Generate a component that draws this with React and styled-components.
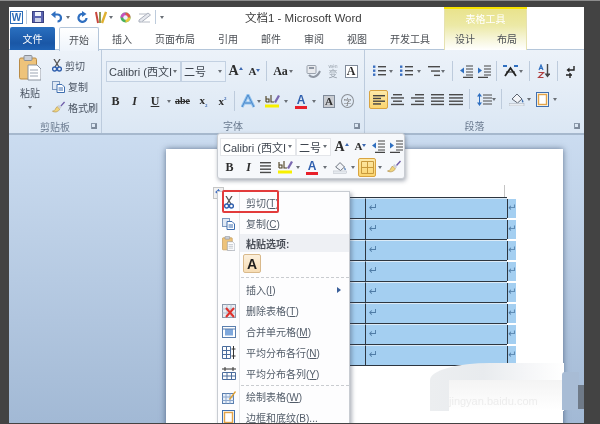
import React from 'react';
import styled, { createGlobalStyle } from 'styled-components';

const Global = createGlobalStyle`
  html, body { margin: 0; padding: 0; background: #434343; }
  body { font-family: "Liberation Sans", "Noto Sans CJK SC", sans-serif; }
`;

const Root = styled.div`
  width: 600px;
  height: 424px;
  box-sizing: border-box;
  padding: 7px 16px 0 9px;
  background: #434343;
  border-top: 1px solid #8d8d8d;
  overflow: hidden;
  filter: blur(0.4px);
`;

const Window = styled.div`
  position: relative;
  height: 416px;
  margin-top: -1px;
  display: flex;
  flex-direction: column;
  overflow: hidden;
`;

const Header = styled.header`
  display: grid;
  grid-template-columns: 435px 83px 1fr;
  height: 43px;
  box-sizing: border-box;
  background: #fff;
  border-bottom: 1px solid #b4c6da;
  flex: none;
`;

const HeaderMain = styled.div`
  display: flex;
  flex-direction: column;
`;

const TitleBar = styled.div`
  display: flex;
  align-items: center;
  height: 20px;
`;

const Title = styled.span`
  margin-left: 81px;
  font-size: 11.5px;
  color: #3c3c3c;
  white-space: nowrap;
`;

const TabRow = styled.nav`
  display: flex;
  align-items: stretch;
  height: 23px;
`;

const FileTab = styled.div`
  width: 45px;
  margin-left: 1px;
  display: flex;
  align-items: center;
  justify-content: center;
  font-size: 10px;
  color: #fff;
  border-radius: 2px 2px 0 0;
  background: linear-gradient(#2a70c0, #1a57a6 70%, #1f62b4);
`;

const Tab = styled.div`
  margin-left: ${p => p.$ml}px;
  display: flex;
  align-items: center;
  font-size: 10px;
  white-space: nowrap;
  color: #4b4f55;
  ${p => p.$active && `
    width: 40px;
    justify-content: center;
    height: 24px;
    box-sizing: border-box;
    border: 1px solid #b4c6da;
    border-bottom: 0;
    border-radius: 2px 2px 0 0;
    background: linear-gradient(#fff, #eef4fb);
    position: relative;
    z-index: 1;
  `}
`;

const TableTools = styled.div`
  display: flex;
  flex-direction: column;
  border-top: 2px solid #f7e300;
  background: linear-gradient(#e9e38c, #ece9a6 40%, #f7f6dc 75%, #fff);
  box-shadow: inset 1px 0 #e6e2b0, inset -1px 0 #e6e2b0;
`;

const ToolsLabel = styled.div`
  height: 18px;
  display: flex;
  align-items: center;
  justify-content: center;
  font-size: 10px;
  color: #fff;
`;

const Ribbon = styled.div`
  display: flex;
  height: 85px;
  box-sizing: border-box;
  flex: none;
  background: linear-gradient(#ecf2f9, #dbe7f4);
  border-bottom: 2px solid #a6b8cd;
`;

const Group = styled.section`
  position: relative;
  width: ${p => p.$w}px;
  flex: none;
  display: flex;
  flex-direction: column;
  padding-top: 9px;
  box-sizing: border-box;
  border-right: ${p => (p.$last ? 0 : '1px solid #bccbdd')};
`;

const GroupBody = styled.div`
  flex: 1;
`;

const GroupLabel = styled.div`
  height: 17px;
  margin-bottom: -1px;
  display: flex;
  align-items: center;
  justify-content: center;
  font-size: 10px;
  color: #6b7b90;
`;

const Launcher = styled.span`
  position: absolute;
  right: 4px;
  bottom: 4px;
  width: 5px;
  height: 5px;
  border-left: 1px solid #8b99aa;
  border-top: 1px solid #8b99aa;
  box-shadow: inset -2px -2px 0 #7d8a9b;
`;

const ClipBody = styled.div`
  display: flex;
  padding-left: 10px;
  margin-top: -4px;
`;

const PasteCol = styled.div`
  display: flex;
  flex-direction: column;
  align-items: center;
  width: 22px;
`;

const PasteLabel = styled.span`
  font-size: 10px;
  color: #4b5563;
  margin-top: 4px;
`;

const SmallCol = styled.div`
  margin-left: 11px;
  display: flex;
  flex-direction: column;
`;

const SmallItem = styled.div`
  height: 21px;
  display: flex;
  align-items: center;
  gap: 3px;
  font-size: 10px;
  color: #4b5563;
`;

const Row = styled.div`
  display: flex;
  align-items: center;
  height: ${p => p.$h || 24}px;
  margin-top: ${p => p.$mt || 0}px;
`;

const Tool = styled.span`
  flex: none;
  display: inline-flex;
  align-items: center;
  justify-content: center;
  position: relative;
  width: ${p => p.$w}px;
  margin-left: ${p => p.$ml || 0}px;
  ${p => p.$on && `
    height: 19px;
    border: 1px solid #d9a441;
    border-radius: 2px;
    box-sizing: border-box;
    background: linear-gradient(#fde9a8, #fbd56f);
  `}
`;

const Caret = styled.span`
  flex: none;
  width: 0;
  margin-left: ${p => p.$ml || 0}px;
  margin-top: ${p => p.$mt || 0}px;
  border-top: 3px solid #6a6f76;
  border-left: 2.5px solid transparent;
  border-right: 2.5px solid transparent;
`;

const Sep = styled.span`
  flex: none;
  width: 1px;
  height: ${p => p.$h || 20}px;
  margin-left: ${p => p.$ml || 0}px;
  background: #bdcbdc;
`;

const Combo = styled.div`
  flex: none;
  box-sizing: border-box;
  width: ${p => p.$w}px;
  height: ${p => p.$h || 21}px;
  margin-left: ${p => p.$ml || 0}px;
  display: flex;
  align-items: center;
  justify-content: space-between;
  padding: 0 3px 0 2px;
  font-size: 11px;
  color: #3f4650;
  white-space: nowrap;
  overflow: hidden;
  background: ${p => p.$bg || '#eaf1f9'};
  border: 1px solid ${p => p.$line || '#c3d1e2'};
`;

const Letter = styled.span`
  font-family: ${p => (p.$sans ? '"Liberation Sans"' : '"Liberation Serif"')}, serif;
  font-size: ${p => p.$s || 12}px;
  font-weight: 700;
  font-style: ${p => (p.$it ? 'italic' : 'normal')};
  text-decoration: ${p => p.$deco || 'none'};
  color: ${p => p.$c || '#2d2d2d'};
  line-height: 1;
  ${p => p.$bar && `border-bottom: 3px solid ${p.$bar}; padding: 0 2px;`}
`;

const Sub = styled.sub`
  font-size: 5px;
  color: #3c68b0;
  line-height: 0;
`;

const Sup = styled.sup`
  font-size: 5px;
  color: #3c68b0;
  line-height: 0;
`;

const Mark = styled.span`
  width: 0;
  align-self: flex-start;
  margin-top: 3px;
  border-left: 2px solid transparent;
  border-right: 2px solid transparent;
  ${p => (p.$down ? 'border-top: 3px solid #3c68b0;' : 'border-bottom: 3px solid #3c68b0;')}
`;

const Boxed = styled.span`
  width: 13px;
  height: 13px;
  display: flex;
  align-items: center;
  justify-content: center;
  border: 1px solid #7f8a99;
  background: ${p => p.$bg || '#fff'};
  box-sizing: border-box;
`;

const Round = styled.span`
  width: 12px;
  height: 12px;
  border-radius: 50%;
  border: 1px solid #8a8f96;
  font-size: 8px;
  color: #777;
  display: flex;
  align-items: center;
  justify-content: center;
`;

const WenStack = styled.span`
  display: flex;
  flex-direction: column;
  align-items: center;
  font-size: 5px;
  line-height: 6px;
  color: #9aa3ad;
`;

const WenChar = styled.span`
  font-size: 9px;
  line-height: 10px;
`;

const WordLogo = styled.span`
  flex: none;
  width: 13px;
  height: 13px;
  margin-left: 1px;
  box-sizing: border-box;
  border: 1px solid #2b6cb8;
  background: #fff;
  color: #2b6cb8;
  font: bold 10px/11px "Liberation Sans", sans-serif;
  text-align: center;
`;

const DocArea = styled.main`
  flex: 1;
  min-height: 0;
  display: flex;
  padding: 14px 0 0 157px;
  background: linear-gradient(#cbdcf0, #a2b9d5);
`;

const Page = styled.div`
  position: relative;
  width: 397px;
  height: 300px;
  box-sizing: border-box;
  padding: 48px 0 0 56px;
  background: #fff;
  box-shadow: 0 0 6px rgba(40, 60, 90, 0.65);
`;

const MoveHandle = styled.span`
  position: absolute;
  left: 47px;
  top: 38px;
  width: 9px;
  height: 10px;
  border: 1px solid #c6c6c6;
  background: #f2f2f2;
  color: #3566c0;
  font-size: 8px;
  line-height: 9px;
  text-align: center;
`;

const CornerMark = styled.span`
  position: absolute;
  left: 338px;
  top: 36px;
  width: 11px;
  height: 12px;
  border-left: 1px solid #c4c4c4;
  box-shadow: 0 11px 0 -10px #c4c4c4;
`;

const TableRow = styled.div`
  display: flex;
  height: 21px;
  box-sizing: border-box;
  border-top: 1px solid #2d3640;
  width: 285px;
`;

const Cell = styled.div`
  box-sizing: border-box;
  flex: none;
  width: ${p => p.$w}px;
  padding-left: 3px;
  background: #a4cff1;
  border-left: ${p => (p.$line ? '1px solid #2d3640' : 0)};
  border-top: 1px solid #dcebf7;
  color: #4f7ca6;
  font: 11px/17px "DejaVu Sans", sans-serif;
`;

const RowEnd = styled.div`
  flex: none;
  width: 8px;
  margin-top: 1px;
  height: 19px;
  background: #a4cff1;
  color: #4f7ca6;
  font: 10px/18px "DejaVu Sans", sans-serif;
  text-align: center;
  border-left: 1px solid #2d3640;
`;

const TableEnd = styled.div`
  width: 285px;
  height: 1px;
  background: #2d3640;
`;

const Smudge = styled.div`
  position: absolute;
  left: 421px;
  top: 356px;
  width: 134px;
  height: 48px;
  border-radius: 60px 0 0 0 / 17px 0 0 0;
  background: linear-gradient(90deg, #eceef0, #e8ebee 40%, #f4f5f7 70%, #fff);
  overflow: hidden;
`;

const SmudgeLower = styled.div`
  position: absolute;
  left: 19px;
  top: 17px;
  width: 115px;
  height: 31px;
  background: linear-gradient(#f4f4f4, #fff);
  color: #ececec;
  font-size: 11px;
  padding-top: 15px;
  box-sizing: border-box;
`;

const TabFold = styled.div`
  position: absolute;
  left: 553px;
  top: 365px;
  width: 17px;
  height: 38px;
  background: #a8bcd5;
  border-radius: 3px 0 0 0;
`;

const TabFoldDark = styled.div`
  position: absolute;
  left: 569px;
  top: 378px;
  width: 17px;
  height: 24px;
  background: #6f7a88;
  border-radius: 0 3px 3px 0;
`;

const MiniBar = styled.div`
  position: absolute;
  left: 208px;
  top: 126px;
  width: 188px;
  height: 46px;
  box-sizing: border-box;
  padding: 3px 2px;
  background: #f6f8fb;
  border: 1px solid #c8ccd2;
  border-radius: 3px;
  box-shadow: 1px 2px 4px rgba(60, 70, 90, 0.45);
  z-index: 3;
`;

const Menu = styled.div`
  position: absolute;
  left: 208px;
  top: 184px;
  width: 133px;
  height: 240px;
  box-sizing: border-box;
  background: #fdfdfe;
  border: 1px solid #c8ccd2;
  box-shadow: 2px 2px 4px rgba(60, 70, 90, 0.4);
  z-index: 2;
`;

const MenuRow = styled.div`
  display: grid;
  grid-template-columns: 22px 1fr;
  height: ${p => p.$h || 21}px;
  font-size: 10px;
  color: #525c69;
  white-space: nowrap;
`;

const MenuIcon = styled.span`
  display: flex;
  align-items: center;
  justify-content: center;
  border-right: 1px solid #e4e6e9;
`;

const MenuText = styled.span`
  display: flex;
  align-items: center;
  justify-content: space-between;
  padding: 0 8px 0 6px;
  ${p => p.$head && 'background: #eef0f4; font-weight: 700; color: #4a4f58;'}
`;

const MenuDash = styled.span`
  align-self: center;
  height: 0;
  margin-left: 1px;
  border-top: 1px dashed #c9ccd0;
`;

const Key = styled.span`
  text-decoration: underline;
`;

const SubArrow = styled.span`
  width: 0;
  border-left: 4px solid #3b5f9a;
  border-top: 3px solid transparent;
  border-bottom: 3px solid transparent;
`;

const PasteBox = styled.span`
  align-self: center;
  margin-left: 3px;
  width: 18px;
  height: 19px;
  display: flex;
  align-items: center;
  justify-content: center;
  box-sizing: border-box;
  border: 1px solid #d9b98b;
  border-radius: 2px;
  background: linear-gradient(#fcf0dc, #f6dcb4);
  font: bold 14px "Liberation Sans", sans-serif;
  color: #1d1d1d;
`;

const RedBox = styled.div`
  position: absolute;
  left: 213px;
  top: 183px;
  width: 57px;
  height: 23px;
  box-sizing: border-box;
  border: 2px solid #e23b3b;
  border-radius: 2px;
  z-index: 4;
`;

const Svg = ({ w, h, children }) => (
  <svg width={w} height={h} viewBox={`0 0 ${w} ${h}`} style={{ display: 'block', flex: 'none' }}>
    {children}
  </svg>
);

// rows of text lines, used by every alignment and list icon
const Lines = ({ w = 13, rows, color = '#4a4a4a', dots, h = 13 }) => (
  <Svg w={w} h={h}>
    {rows.map(([a, b], i) => (
      <rect key={i} x={a} y={i * (h / rows.length) + 1} width={b - a} height="1.4" fill={color} />
    ))}
    {dots && rows.map((_, i) => (
      <rect key={i} x="0" y={i * (h / rows.length) + 0.5} width="2.4" height="2.4" fill="#3a6fc0" />
    ))}
  </Svg>
);

const Clipboard = ({ w = 22, h = 26 }) => (
  <svg width={w} height={h} viewBox="0 0 22 26" style={{ display: 'block', flex: 'none' }}>
    <rect x="0.5" y="3" width="17" height="21" rx="1.5" fill="#eec37a" stroke="#b98b45" />
    <rect x="5" y="0.5" width="8" height="5" rx="1" fill="#c9ced6" stroke="#8b8f96" />
    <path d="M9 10h9l4 4v11H9z" fill="#fff" stroke="#8a93a0" />
    <path d="M11 15h8M11 18h8M11 21h8" stroke="#9da6b3" />
  </svg>
);

const Scissors = () => (
  <Svg w={10} h={13}>
    <path d="M2 0l5 8M8 0L3 8" stroke="#555" strokeWidth="1.3" />
    <circle cx="2.6" cy="10" r="2" fill="none" stroke="#2f5fae" strokeWidth="1.4" />
    <circle cx="7.4" cy="10" r="2" fill="none" stroke="#2f5fae" strokeWidth="1.4" />
  </Svg>
);

const CopyIcon = () => (
  <Svg w={13} h={12}>
    <rect x="0.5" y="0.5" width="7" height="8" fill="#dfe8f4" stroke="#7d98bd" />
    <path d="M5 3.5h5l2.5 2.5v5.5H5z" fill="#fff" stroke="#3f6fb0" />
    <path d="M6.5 7h4.5M6.5 9h4.5" stroke="#3f6fb0" />
  </Svg>
);

const BrushIcon = ({ s = 14 }) => (
  <svg width={s} height={s} viewBox="0 0 14 14" style={{ display: 'block', flex: 'none' }}>
    <path d="M0.5 11c3 0 3-3 5-5l3 3c-2 2-4 4-8 2z" fill="#f0d57d" stroke="#b3914a" strokeWidth="0.7" />
    <path d="M6 5.5l2.8 2.8 1.4-1.4L7.4 4.1z" fill="#c9ced6" />
    <path d="M9 5l4-4.5 1 1L10 6z" fill="#6d5aa8" />
  </svg>
);

const Save = () => (
  <Svg w={12} h={12}>
    <rect x="0.5" y="0.5" width="11" height="11" fill="#5a63b0" stroke="#39407e" />
    <rect x="3" y="1" width="6" height="4" fill="#eef1fa" />
    <rect x="3" y="7" width="6" height="4" fill="#c9cfe6" />
  </Svg>
);

const Undo = () => (
  <Svg w={11} h={12}>
    <path d="M2.5 3.5h4a3 3 0 0 1 0 7" fill="none" stroke="#2f6fc0" strokeWidth="2.2" />
    <path d="M4.5 0L0 3.6l4.5 3.6z" fill="#2f6fc0" />
  </Svg>
);

const Redo = () => (
  <Svg w={11} h={12}>
    <path d="M7 3.2A4 4 0 1 0 9.5 7" fill="none" stroke="#2f6fc0" strokeWidth="2.2" />
    <path d="M5 0l4.5 3L5 6z" fill="#2f6fc0" />
  </Svg>
);

const Pens = () => (
  <Svg w={13} h={13}>
    <path d="M2 1l2 11" stroke="#c8463c" strokeWidth="2" />
    <path d="M6 1v11" stroke="#8a9a55" strokeWidth="2" />
    <path d="M12 1L8 12" stroke="#e0b030" strokeWidth="2.4" />
  </Svg>
);

const Wheel = () => (
  <svg width="11" height="11" viewBox="0 0 11 11" style={{ display: 'block' }}>
    <circle cx="5.5" cy="5.5" r="5" fill="#45b060" />
    <path d="M5.5 5.5V.5A5 5 0 0 1 10.5 5.5z" fill="#e2534a" />
    <path d="M5.5 5.5H.5A5 5 0 0 1 5.5 .5z" fill="#c850c0" />
    <path d="M5.5 5.5h5a5 5 0 0 1-5 5z" fill="#e8c83a" />
    <circle cx="5.5" cy="5.5" r="2.2" fill="#eef" />
  </svg>
);

const Eraser = () => (
  <Svg w={13} h={11}>
    <path d="M1 8L10 1l2.5 2-9 7H1z" fill="#e6e8ee" stroke="#aab0bc" />
    <path d="M1 2h8M4 10h8" stroke="#b5bac4" />
  </Svg>
);

const Proof = () => (
  <Svg w={15} h={13}>
    <rect x="1" y="0.5" width="9" height="8" rx="1" fill="#e8eaee" stroke="#9aa2ad" />
    <path d="M3 10c3 3 8 3 11-4" fill="none" stroke="#8f97a3" strokeWidth="2" />
    <rect x="3" y="2" width="5" height="2" fill="#8f97a3" />
  </Svg>
);

const IndentLeft = () => (
  <Svg w={13} h={13}>
    <path d="M6 1h7M6 4h7M6 7h7M6 10h7M3 12.4h10" stroke="#444" strokeWidth="1.2" />
    <path d="M0 5.5L4 2.5v6z" fill="#2f6fc0" />
  </Svg>
);

const IndentRight = () => (
  <Svg w={13} h={13}>
    <path d="M6 1h7M6 4h7M6 7h7M6 10h7M0 12.4h10" stroke="#444" strokeWidth="1.2" />
    <path d="M4 5.5L0 2.5v6z" fill="#2f6fc0" />
  </Svg>
);

const CrossArrows = () => (
  <Svg w={15} h={12}>
    <path d="M2 11L7.5 3 13 11" fill="none" stroke="#222" strokeWidth="1.8" />
    <path d="M3 7h9" stroke="#222" strokeWidth="1" />
    <path d="M0 1h4M11 1h4" stroke="#2f6fc0" strokeWidth="2" />
  </Svg>
);

const SortAz = () => (
  <Svg w={13} h={14}>
    <path d="M2 6l2-5 2 5M2.6 4.4h2.8" fill="none" stroke="#2f6fc0" strokeWidth="1.2" />
    <path d="M1.5 8.5h5l-5 5h5" fill="none" stroke="#b04040" strokeWidth="1.2" />
    <path d="M10.5 0v10" stroke="#444" strokeWidth="1.4" />
    <path d="M7.5 9.5h6l-3 4z" fill="#444" />
  </Svg>
);

const Pilcrow = () => (
  <Svg w={9} h={13}>
    <path d="M8 1v4H2" fill="none" stroke="#222" strokeWidth="1.4" />
    <path d="M3.5 2.5L0.5 5l3 2.5z" fill="#222" />
    <path d="M0 10h6M4 8v5" stroke="#222" strokeWidth="1.4" />
  </Svg>
);

const LineSpacing = () => (
  <Svg w={15} h={13}>
    <path d="M6 2h9M6 5h9M6 8h9M6 11h9" stroke="#4a4a4a" strokeWidth="1.2" />
    <path d="M2.5 0L5 3.4H0zM2.5 13L0 9.6h5z" fill="#2f6fc0" />
    <path d="M2.5 3v7" stroke="#2f6fc0" />
  </Svg>
);

const Bucket = ({ w = 17 }) => (
  <svg width={w} height="14" viewBox="0 0 17 14" style={{ display: 'block', flex: 'none' }}>
    <path d="M3 7l5-5 5 5-4.5 4z" fill="#f2f4f8" stroke="#5c6470" />
    <path d="M13 7c1.5 2 2 3 1 3.5S12.5 9 13 7z" fill="#3f6fb0" />
    <rect x="0" y="11.5" width="15" height="2.5" fill="#e9edf2" stroke="#a5acb6" strokeWidth="0.5" />
  </svg>
);

const PageBorder = () => (
  <Svg w={13} h={15}>
    <rect x="0.5" y="0.5" width="12" height="14" fill="#fdfaf0" stroke="#3f6fb0" />
    <rect x="2.5" y="2.5" width="8" height="10" fill="#fff" stroke="#e2a34a" strokeWidth="1.4" />
  </Svg>
);

const GridIcon = () => (
  <Svg w={13} h={13}>
    <path d="M.5 .5h12v12H.5zM6.5 .5v12M.5 6.5h12" fill="none" stroke="#c99a3c" />
  </Svg>
);

const Highlight = () => (
  <Svg w={15} h={14}>
    <path d="M9 8l4-7 2 1-4 7z" fill="#7a68b0" />
    <rect x="0" y="10.5" width="14" height="3" fill="#f7f000" />
    <path d="M1 8V2M1 5h3v3H1M6 1v7h3" fill="none" stroke="#4b3f20" strokeWidth="1.1" />
  </Svg>
);

const GlowA = () => (
  <Svg w={14} h={14}>
    <path d="M1 13L7 1l6 12M3.5 9h7" fill="none" stroke="#8fc1ee" strokeWidth="3" />
    <path d="M1 13L7 1l6 12M3.5 9h7" fill="none" stroke="#4a86c8" strokeWidth="1" />
  </Svg>
);

const TableDelete = () => (
  <Svg w={14} h={14}>
    <rect x=".5" y=".5" width="13" height="13" fill="#e8edf4" stroke="#8d99aa" />
    <path d="M.5 5h13M.5 9h13M5 .5v13M9 .5v13" stroke="#b8c2cf" />
    <path d="M4 4l8 9M12 4l-8 9" stroke="#e0322c" strokeWidth="2" />
  </Svg>
);

const TableMerge = () => (
  <Svg w={14} h={12}>
    <rect x=".5" y=".5" width="13" height="11" fill="#fff" stroke="#5b7fae" />
    <rect x="3" y="3" width="8" height="6.5" fill="#7fa8dc" />
    <path d="M.5 3h13" stroke="#5b7fae" />
  </Svg>
);

const RowsEven = () => (
  <Svg w={14} h={13}>
    <path d="M.5 .5h8v12h-8zM.5 4.5h8M.5 8.5h8M4.5 .5v12" fill="none" stroke="#4a6c9c" />
    <path d="M11.5 0v13M9.5 3h4M9.5 10h4" stroke="#333" />
  </Svg>
);

const ColsEven = () => (
  <Svg w={14} h={13}>
    <path d="M.5 5.5h13v7H.5zM5 5.5v7M9.5 5.5v7M.5 9h13" fill="none" stroke="#4a6c9c" />
    <path d="M0 2h14M3 0v4M11 0v4" stroke="#333" />
  </Svg>
);

const DrawTable = () => (
  <Svg w={14} h={14}>
    <rect x=".5" y="3.5" width="11" height="10" fill="#e8f0fa" stroke="#5b7fae" />
    <path d="M.5 7h11M.5 10.5h11M4 3.5v10M8 3.5v10" stroke="#8aa6cc" />
    <path d="M7 9l6-8 1 1-6 8z" fill="#e0a030" />
  </Svg>
);

const Para = ({ ml, w = 13, rows }) => (
  <Tool $ml={ml} $w={w}><Lines w={w} rows={rows} /></Tool>
);

const CENTER = [[2, 11], [0, 13], [2, 11], [0, 13]];
const RIGHT = [[4, 13], [0, 13], [4, 13], [0, 13]];
const FULL = [[0, 13], [0, 13], [0, 13], [0, 13]];
const BULLET = [[5, 13], [5, 13], [5, 13]];

const rowCount = Array.from({ length: 8 }, (_, i) => i);

const GrowA = ({ down, ml }) => (
  <Tool $ml={ml} $w={13}>
    <Letter $s={down ? 11 : 14}>A</Letter>
    <Mark $down={down} />
  </Tool>
);

const Item = ({ icon, label, k, tail, arrow }) => (
  <MenuRow>
    <MenuIcon>{icon}</MenuIcon>
    <MenuText>
      <span>{label}(<Key>{k}</Key>){tail}</span>
      {arrow && <SubArrow />}
    </MenuText>
  </MenuRow>
);

const App = () => (
  <Root>
    <Global />
    <Window>
      <Header>
        <HeaderMain>
          <TitleBar>
            <WordLogo>W</WordLogo>
            <Sep $ml={3} $h={14} />
            <Tool $ml={5} $w={12}><Save /></Tool>
            <Tool $ml={7} $w={11}><Undo /></Tool>
            <Caret $ml={4} />
            <Tool $ml={7} $w={11}><Redo /></Tool>
            <Tool $ml={6} $w={13}><Pens /></Tool>
            <Caret $ml={2} />
            <Tool $ml={7} $w={11}><Wheel /></Tool>
            <Tool $ml={7} $w={13}><Eraser /></Tool>
            <Sep $ml={4} $h={14} />
            <Caret $ml={4} />
            <Title>文档1 - Microsoft Word</Title>
          </TitleBar>
          <TabRow>
            <FileTab>文件</FileTab>
            <Tab $active $ml={4}>开始</Tab>
            <Tab $ml={13}>插入</Tab>
            <Tab $ml={23}>页面布局</Tab>
            <Tab $ml={23}>引用</Tab>
            <Tab $ml={23}>邮件</Tab>
            <Tab $ml={23}>审阅</Tab>
            <Tab $ml={23}>视图</Tab>
            <Tab $ml={23}>开发工具</Tab>
          </TabRow>
        </HeaderMain>
        <TableTools>
          <ToolsLabel>表格工具</ToolsLabel>
          <TabRow>
            <Tab $ml={11}>设计</Tab>
            <Tab $ml={22}>布局</Tab>
          </TabRow>
        </TableTools>
      </Header>

      <Ribbon>
        <Group $w={93}>
          <GroupBody>
            <ClipBody>
              <PasteCol>
                <Clipboard />
                <PasteLabel>粘贴</PasteLabel>
                <Caret $mt={6} />
              </PasteCol>
              <SmallCol>
                <SmallItem><Scissors />剪切</SmallItem>
                <SmallItem><CopyIcon />复制</SmallItem>
                <SmallItem><BrushIcon s={13} />格式刷</SmallItem>
              </SmallCol>
            </ClipBody>
          </GroupBody>
          <GroupLabel>剪贴板</GroupLabel>
          <Launcher />
        </Group>

        <Group $w={263}>
          <GroupBody>
            <Row>
              <Combo $ml={4} $w={75}>Calibri (西文I<Caret /></Combo>
              <Combo $w={45}>二号<Caret /></Combo>
              <GrowA ml={3} />
              <GrowA ml={6} down />
              <Sep $ml={5} />
              <Tool $ml={7} $w={13}><Letter $s={12}>Aa</Letter></Tool>
              <Caret $ml={2} />
              <Tool $ml={13} $w={15}><Proof /></Tool>
              <Tool $ml={5} $w={14}><WenStack>wén<WenChar>变</WenChar></WenStack></Tool>
              <Tool $ml={4} $w={14}><Boxed><Letter $s={12}>A</Letter></Boxed></Tool>
            </Row>
            <Row $mt={6}>
              <Tool $ml={9} $w={9}><Letter>B</Letter></Tool>
              <Tool $ml={10} $w={9}><Letter $it>I</Letter></Tool>
              <Tool $ml={11} $w={10}><Letter $deco="underline">U</Letter></Tool>
              <Caret $ml={7} />
              <Tool $ml={4} $w={15}><Letter $s={10} $deco="line-through">abe</Letter></Tool>
              <Tool $ml={7} $w={13}><Letter $s={11}>x<Sub>2</Sub></Letter></Tool>
              <Tool $ml={6} $w={13}><Letter $s={11}>x<Sup>2</Sup></Letter></Tool>
              <Sep $ml={5} />
              <Tool $ml={6} $w={14}><GlowA /></Tool>
              <Caret $ml={2} />
              <Tool $ml={4} $w={15}><Highlight /></Tool>
              <Caret $ml={4} />
              <Tool $ml={6} $w={14}><Letter $sans $s={12} $c="#2f5fae" $bar="#e8202a">A</Letter></Tool>
              <Caret $ml={4} />
              <Tool $ml={7} $w={12}><Boxed $bg="#c9ccd1"><Letter $s={11}>A</Letter></Boxed></Tool>
              <Tool $ml={6} $w={13}><Round>字</Round></Tool>
            </Row>
          </GroupBody>
          <GroupLabel>字体</GroupLabel>
          <Launcher />
        </Group>

        <Group $w={219} $last>
          <GroupBody>
            <Row>
              <Tool $ml={8} $w={13}><Lines rows={BULLET} dots h={12} /></Tool>
              <Caret $ml={3} />
              <Tool $ml={7} $w={13}><Lines rows={BULLET} dots h={12} /></Tool>
              <Caret $ml={4} />
              <Para ml={5} w={14} rows={[[2, 14], [5, 14], [8, 14]]} />
              <Caret $ml={1} />
              <Sep $ml={7} />
              <Tool $ml={7} $w={13}><IndentLeft /></Tool>
              <Tool $ml={5} $w={13}><IndentRight /></Tool>
              <Sep $ml={5} />
              <Tool $ml={6} $w={15}><CrossArrows /></Tool>
              <Caret $ml={1} />
              <Sep $ml={6} />
              <Tool $ml={7} $w={13}><SortAz /></Tool>
              <Sep $ml={7} />
              <Tool $ml={8} $w={9}><Pilcrow /></Tool>
            </Row>
            <Row $mt={4}>
              <Tool $on $ml={4} $w={19}><Lines w={12} h={11} rows={[[0, 12], [0, 8], [0, 12], [0, 8]]} color="#444" /></Tool>
              <Para ml={3} rows={CENTER} />
              <Para ml={7} rows={RIGHT} />
              <Para ml={7} rows={FULL} />
              <Para ml={5} w={14} rows={[[0, 14], [0, 14], [0, 14], [0, 14]]} />
              <Sep $ml={6} />
              <Tool $ml={7} $w={15}><LineSpacing /></Tool>
              <Caret />
              <Sep $ml={5} />
              <Tool $ml={7} $w={17}><Bucket /></Tool>
              <Caret $ml={1} />
              <Tool $ml={5} $w={13}><PageBorder /></Tool>
              <Caret $ml={4} />
            </Row>
          </GroupBody>
          <GroupLabel>段落</GroupLabel>
          <Launcher />
        </Group>
      </Ribbon>

      <DocArea>
        <Page>
          <MoveHandle>✥</MoveHandle>
          <CornerMark />
          {rowCount.map(i => (
            <TableRow key={i}>
              <Cell $w={143} />
              <Cell $w={142} $line>↵</Cell>
              <RowEnd>↵</RowEnd>
            </TableRow>
          ))}
          <TableEnd />
        </Page>
      </DocArea>

      <MiniBar>
        <Row $h={19}>
          <Combo $w={76} $h={18} $bg="#fff" $line="#e4e6ea">Calibri (西文I<Caret /></Combo>
          <Combo $w={35} $h={18} $bg="#fff" $line="#e4e6ea">二号<Caret /></Combo>
          <GrowA ml={4} />
          <GrowA ml={6} down />
          <Tool $ml={5} $w={13}><IndentLeft /></Tool>
          <Tool $ml={5} $w={13}><IndentRight /></Tool>
        </Row>
        <Row $h={20} $mt={1}>
          <Tool $ml={5} $w={9}><Letter>B</Letter></Tool>
          <Tool $ml={10} $w={9}><Letter $it>I</Letter></Tool>
          <Para ml={7} w={11} rows={[[0, 11], [0, 11], [0, 11], [0, 11]]} />
          <Tool $ml={7} $w={15}><Highlight /></Tool>
          <Caret $ml={3} />
          <Tool $ml={5} $w={14}><Letter $sans $s={12} $c="#2f5fae" $bar="#e8202a">A</Letter></Tool>
          <Caret $ml={4} />
          <Tool $ml={6} $w={15}><Bucket w={15} /></Tool>
          <Caret $ml={3} />
          <Tool $on $ml={3} $w={18}><GridIcon /></Tool>
          <Caret $ml={2} />
          <Tool $ml={5} $w={14}><BrushIcon /></Tool>
        </Row>
      </MiniBar>

      <Menu>
        <Item icon={<Scissors />} label="剪切" k="T" />
        <Item icon={<CopyIcon />} label="复制" k="C" />
        <MenuRow $h={18}>
          <MenuIcon><Clipboard w={13} h={15} /></MenuIcon>
          <MenuText $head>粘贴选项:</MenuText>
        </MenuRow>
        <MenuRow $h={23}>
          <MenuIcon />
          <PasteBox>A</PasteBox>
        </MenuRow>
        <MenuRow $h={4}>
          <MenuIcon />
          <MenuDash />
        </MenuRow>
        <Item label="插入" k="I" arrow />
        <Item icon={<TableDelete />} label="删除表格" k="T" />
        <Item icon={<TableMerge />} label="合并单元格" k="M" />
        <Item icon={<RowsEven />} label="平均分布各行" k="N" />
        <Item icon={<ColsEven />} label="平均分布各列" k="Y" />
        <MenuRow $h={2}>
          <MenuIcon />
          <MenuDash />
        </MenuRow>
        <Item icon={<DrawTable />} label="绘制表格" k="W" />
        <Item icon={<PageBorder />} label="边框和底纹" k="B" tail="..." />
      </Menu>

      <RedBox />
      <Smudge>
        <SmudgeLower>jingyan.baidu.com</SmudgeLower>
      </Smudge>
      <TabFold />
      <TabFoldDark />
    </Window>
  </Root>
);

export default App;
